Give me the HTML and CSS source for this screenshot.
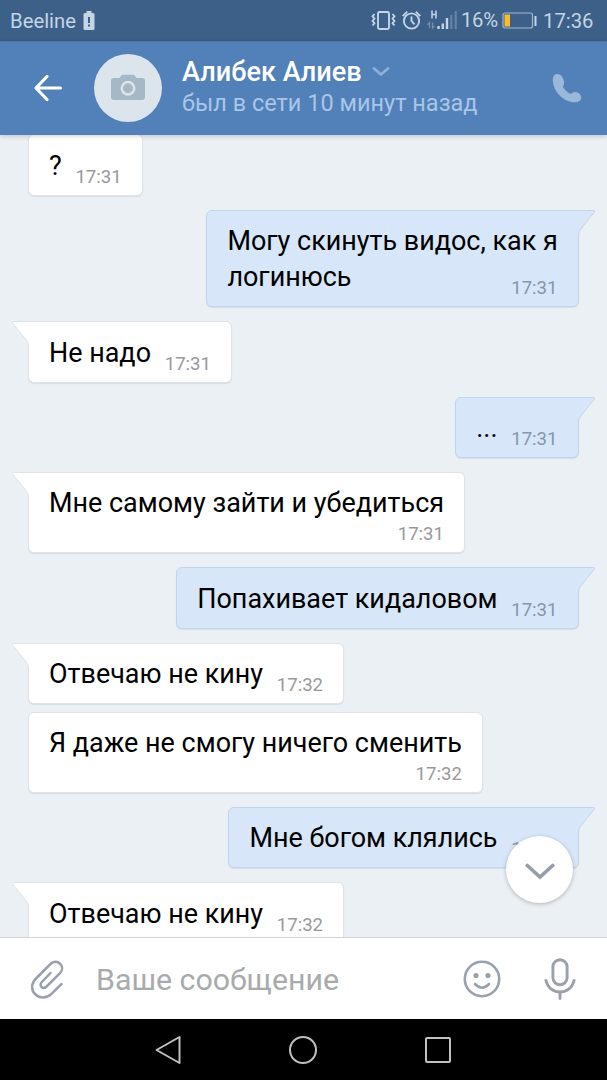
FILE: index.html
```
<!DOCTYPE html>
<html lang="ru">
<head>
<meta charset="utf-8">
<title>Алибек Алиев</title>
<link rel="stylesheet" href="styles.css">
</head>
<body>
<div class="phone">
  <div class="status">
    <span class="carrier">Beeline</span>
    <svg class="low" width="12" height="20" viewBox="0 0 12 20"><path d="M3.500 0h5v2H10q1.500 0 1.500 1.500v14q0 1.500-1.500 1.500H2Q.5 19 .5 17.500v-14Q.5 2 2 2h1.500z" fill="#c5d5e6"/><path d="M5 6h2v6H5zM5 13.500h2v2H5z" fill="#3e6088"/></svg>
    <svg class="sys" width="88" height="24" viewBox="0 0 88 24" fill="none" stroke="#c3d4e6">
      <rect x="7" y="3" width="11" height="17" rx="1.500" stroke-width="1.900"/>
      <path d="M3.500 5L1.500 7.300l2 2.300-2 2.300 2 2.300-2 2.300M21.500 5l2 2.300-2 2.300 2 2.300-2 2.300 2 2.300" stroke-width="1.800"/>
      <circle cx="40.500" cy="12" r="7.600" stroke-width="1.900"/>
      <path d="M40.500 7.500V12l3 3.300M31.700 7.200l4.500-4.500M49.300 7.200l-4.500-4.500" stroke-width="1.900"/>
      <path d="M61 1.500v8M65 1.500v8M61 5.500h4" stroke-width="1.500"/>
      <path d="M58.500 19v-5.500l-2 2.200M61.500 13.500V19l2-2.200" stroke="#7890ae" stroke-width="1.200"/>
      <path d="M67.500 20v-3M71.800 20v-5.500M76 20V9" stroke-width="2.400"/>
      <path d="M80.300 20V6M84.700 20V2" stroke="#6683a5" stroke-width="2.200"/>
    </svg>
    <span class="percent">16%</span>
    <svg class="battery" width="35" height="17" viewBox="0 0 35 17"><rect x="1" y="1" width="29.500" height="15" rx="2" fill="none" stroke="#a5b9cf" stroke-width="1.200"/><path d="M2.500 2.500h5.500v12H2.500z" fill="#fdbb27"/><path d="M32.500 4h2v10h-2z" fill="#c3d4e6"/></svg>
    <span class="clock">17:36</span>
  </div>

  <header class="header">
    <svg class="back" width="30" height="28" viewBox="0 0 30 28" fill="none" stroke="#fff" stroke-width="3.200" stroke-linecap="round" stroke-linejoin="round"><path d="M14 2.500L3 14l11 11.500M3.500 14h24"/></svg>
    <div class="avatar">
      <svg width="34" height="27" viewBox="0 0 34 27"><path d="M3 4h5.500l2-2.500Q11 .8 12 .8h10q1 0 1.500.7l2 2.500H31q3 0 3 3v16q0 3-3 3H3q-3 0-3-3V7q0-3 3-3z" fill="#a6b7c5"/><circle cx="17" cy="14.300" r="6.200" fill="none" stroke="#dce5ec" stroke-width="2.500"/></svg>
    </div>
    <div class="peer">
      <div class="name"><span>Алибек Алиев</span><svg width="18" height="10" viewBox="0 0 18 10" fill="none" stroke="#8fb0d8" stroke-width="2.800" stroke-linecap="round" stroke-linejoin="round"><path d="M2 1.500l7 6 7-6"/></svg></div>
      <div class="seen">был в сети 10 минут назад</div>
    </div>
    <svg class="call" width="30" height="30" viewBox="0 0 30 30" fill="#9ab8da"><path d="M5 1C2.600 1 .7 3.400.8 7.200 1 18.500 12 29.300 22.800 29.300c3.900 0 6.500-2 6.500-4.800 0-2.300-2.400-5.300-5.800-5.600-2.300-.2-3.600 1.300-4.800 2.200-3.300-1.600-6-4-7.900-7.300C12 12.500 12.200 11 12 8.800 11.700 4.400 8.500.8 5 1z"/></svg>
  </header>

  <main class="chat">
    <div class="msg in first"><p>?</p><time>17:31</time></div>
    <div class="msg out wrap"><svg class="tail" width="18" height="25" viewBox="0 0 18 25"><path class="fill" d="M0 .5h15.500q2 0 .8 1.700L3.500 18Q.5 21.500.5 25H0z"/><path class="edge" d="M0 .5h15.500q2 0 .8 1.700L3.500 18Q.5 21.500.5 25"/></svg><p>Могу скинуть видос, как я<br>логинюсь</p><time>17:31</time></div>
    <div class="msg in"><svg class="tail" width="18" height="25" viewBox="0 0 18 25"><path class="fill" d="M18 .5H2.500q-2 0-.8 1.700L14.500 18q3 3.500 3 7h.5z"/><path class="edge" d="M18 .5H2.500q-2 0-.8 1.700L14.500 18q3 3.500 3 7"/></svg><p>Не надо</p><time>17:31</time></div>
    <div class="msg out"><svg class="tail" width="18" height="25" viewBox="0 0 18 25"><path class="fill" d="M0 .5h15.500q2 0 .8 1.700L3.500 18Q.5 21.500.5 25H0z"/><path class="edge" d="M0 .5h15.500q2 0 .8 1.700L3.500 18Q.5 21.500.5 25"/></svg><p class="dots">...</p><time>17:31</time></div>
    <div class="msg in stack"><svg class="tail" width="18" height="25" viewBox="0 0 18 25"><path class="fill" d="M18 .5H2.500q-2 0-.8 1.700L14.500 18q3 3.500 3 7h.5z"/><path class="edge" d="M18 .5H2.500q-2 0-.8 1.700L14.500 18q3 3.500 3 7"/></svg><p>Мне самому зайти и убедиться</p><time>17:31</time></div>
    <div class="msg out"><svg class="tail" width="18" height="25" viewBox="0 0 18 25"><path class="fill" d="M0 .5h15.500q2 0 .8 1.700L3.500 18Q.5 21.500.5 25H0z"/><path class="edge" d="M0 .5h15.500q2 0 .8 1.700L3.500 18Q.5 21.500.5 25"/></svg><p>Попахивает кидаловом</p><time>17:31</time></div>
    <div class="msg in"><svg class="tail" width="18" height="25" viewBox="0 0 18 25"><path class="fill" d="M18 .5H2.500q-2 0-.8 1.700L14.500 18q3 3.500 3 7h.5z"/><path class="edge" d="M18 .5H2.500q-2 0-.8 1.700L14.500 18q3 3.500 3 7"/></svg><p>Отвечаю не кину</p><time>17:32</time></div>
    <div class="msg in stack follow"><p>Я даже не смогу ничего сменить</p><time>17:32</time></div>
    <div class="msg out"><svg class="tail" width="18" height="25" viewBox="0 0 18 25"><path class="fill" d="M0 .5h15.500q2 0 .8 1.700L3.500 18Q.5 21.500.5 25H0z"/><path class="edge" d="M0 .5h15.500q2 0 .8 1.700L3.500 18Q.5 21.500.5 25"/></svg><p>Мне богом клялись</p><time>17:32</time></div>
    <div class="msg in"><svg class="tail" width="18" height="25" viewBox="0 0 18 25"><path class="fill" d="M18 .5H2.500q-2 0-.8 1.700L14.500 18q3 3.500 3 7h.5z"/><path class="edge" d="M18 .5H2.500q-2 0-.8 1.700L14.500 18q3 3.500 3 7"/></svg><p>Отвечаю не кину</p><time>17:32</time></div>
    <div class="down"><svg width="30" height="18" viewBox="0 0 30 18" fill="none" stroke="#959ea9" stroke-width="3.600" stroke-linecap="round"><path d="M2.300 3.500L15 15 27.700 3.500"/></svg></div>
  </main>

  <footer class="composer">
    <svg class="clip" width="36" height="40" viewBox="0 0 36 40" fill="none" stroke="#98a1ad" stroke-width="2.500" stroke-linecap="round" stroke-linejoin="round"><path d="M20.500 14L11.800 23c-3.500 3.800 1.200 8 4.800 4.500L30 14.200c6.300-6.800-3-15.400-9.500-9.200L6 19.500c-11.500 12 5 25.500 15.500 15.300L31.500 25"/></svg>
    <span class="placeholder">Ваше сообщение</span>
    <svg class="smile" width="38" height="38" viewBox="0 0 38 38" fill="none" stroke="#98a1ad" stroke-width="2.600" stroke-linecap="round"><circle cx="19" cy="19" r="17.200"/><path d="M12 24q7 7.400 14 0"/><circle cx="13" cy="15.500" r="2.600" fill="#98a1ad" stroke="none"/><circle cx="25" cy="15.500" r="2.600" fill="#98a1ad" stroke="none"/></svg>
    <svg class="mic" width="32" height="42" viewBox="0 0 32 42" fill="none" stroke="#98a1ad" stroke-width="2.900" stroke-linecap="round"><rect x="8.900" y="1.700" width="14.200" height="25" rx="7.100"/><path d="M1.900 22.500C3.500 29.500 9 34 16 34s12.500-4.500 14.100-11.500M16 34v6.500"/></svg>
  </footer>

  <nav class="nav">
    <svg width="26" height="30" viewBox="0 0 26 30" fill="none" stroke="#c0c0c0" stroke-width="2" stroke-linejoin="round"><path d="M24.500 2v26L1.500 15z"/></svg>
    <svg width="30" height="30" viewBox="0 0 30 30" fill="none" stroke="#c0c0c0" stroke-width="2"><circle cx="15" cy="15" r="13"/></svg>
    <svg width="26" height="26" viewBox="0 0 26 26" fill="none" stroke="#c0c0c0" stroke-width="2"><rect x="1" y="1" width="24" height="24" rx="1"/></svg>
  </nav>
</div>
</body>
</html>
```

FILE: styles.css
```
* { box-sizing: border-box; }
body { margin: 0; font-family: Roboto, "Noto Sans", sans-serif; }
svg { display: block; flex: none; }
p { margin: 0; }

.phone { width: 607px; height: 1080px; display: flex; flex-direction: column; overflow: hidden; }

.status { height: 41px; flex: none; background: #3d6088; color: #c3d4e6; display: flex; align-items: center; padding: 0 14px 0 10px; font-size: 20.300px; }
.carrier { width: 65px; margin-right: 8px; white-space: nowrap; padding-top: 1px; }
.low { margin-top: 1px; }
.sys { margin-left: auto; }
.percent { margin-left: 2px; width: 37px; white-space: nowrap; letter-spacing: -.3px; margin-top: -2px; }
.battery { margin-left: 4px; margin-top: -1px; }
.clock { margin-left: 6px; width: 50px; white-space: nowrap; padding-top: 1px; }

.header { height: 94px; flex: none; background: #5181b8; display: flex; align-items: center; padding: 0 25px 2px 33px; position: relative; z-index: 2; box-shadow: 0 1px 5px rgba(0, 0, 0, .2); border-top: 1px solid #4a76a9; }
.avatar { width: 68px; height: 68px; border-radius: 50%; background: #dce5ec; margin-left: 31px; display: flex; align-items: center; justify-content: center; flex: none; }
.peer { margin-left: 20px; flex: 1; white-space: nowrap; padding-bottom: 1px; }
.name { display: flex; align-items: center; gap: 10px; color: #fff; font-size: 27.100px; font-weight: 500; line-height: 32px; }
.seen { color: #a9c5e8; font-size: 23.500px; line-height: 30px; }

.chat { flex: 1; min-height: 0; background: #ebf0f4; display: flex; flex-direction: column; align-items: flex-start; gap: 14px; padding: 0 28.500px 0 29px; overflow: hidden; position: relative; }
.msg { --bg: #fff; --line: #dde3e9; position: relative; flex: none; display: flex; align-items: flex-end; column-gap: 13.700px; min-height: 61.400px; padding: 12px 20px 7px; background: var(--bg); border: 1px solid var(--line); border-radius: 6px; box-shadow: 0 1px 1px rgba(80, 100, 130, .13); white-space: nowrap; }
.msg p { font-size: 26.950px; line-height: 36px; padding-bottom: 4px; color: #000; }
.msg time { font-size: 18.600px; line-height: 22px; color: #999; }
.msg.in { margin-left: -1px; }
.msg.first { margin-top: -1px; min-height: 62.400px; }
.msg.out { --bg: #d7e7f9; --line: #c3d5eb; align-self: flex-end; }
.msg.out time { color: #8796aa; }
.msg.out.wrap { column-gap: 0; }
.msg.wrap time { margin-left: -46.500px; }
.msg.stack { flex-direction: column; }
.msg.stack p { padding-bottom: 2px; }
.msg.follow { margin-top: -6px; }
.msg.in:has(.tail) { border-top-left-radius: 0; }
.msg.out:has(.tail) { border-top-right-radius: 0; }
.tail { position: absolute; top: -1px; }
.in .tail { left: -18px; }
.out .tail { right: -18px; }
.tail .fill { fill: var(--bg); }
.tail .edge { fill: none; stroke: var(--line); }

.down { position: absolute; left: 506px; top: 701px; width: 67px; height: 67px; border-radius: 50%; background: #fff; box-shadow: 0 1px 4px rgba(0, 0, 0, .25); display: flex; align-items: center; justify-content: center; padding-top: 3px; }

.composer { height: 82px; flex: none; background: #fff; border-top: 1px solid #d0d5d9; display: flex; align-items: center; padding: 0 31px 0 30px; position: relative; z-index: 1; }
.placeholder { margin-left: 30px; flex: 1; font-size: 30.350px; color: #a7abae; white-space: nowrap; padding-top: 2px; }
.mic { margin-left: 43px; }

.nav { height: 61px; flex: none; background: #000; display: flex; align-items: center; justify-content: center; gap: 107px; padding-right: 1px; }
```
